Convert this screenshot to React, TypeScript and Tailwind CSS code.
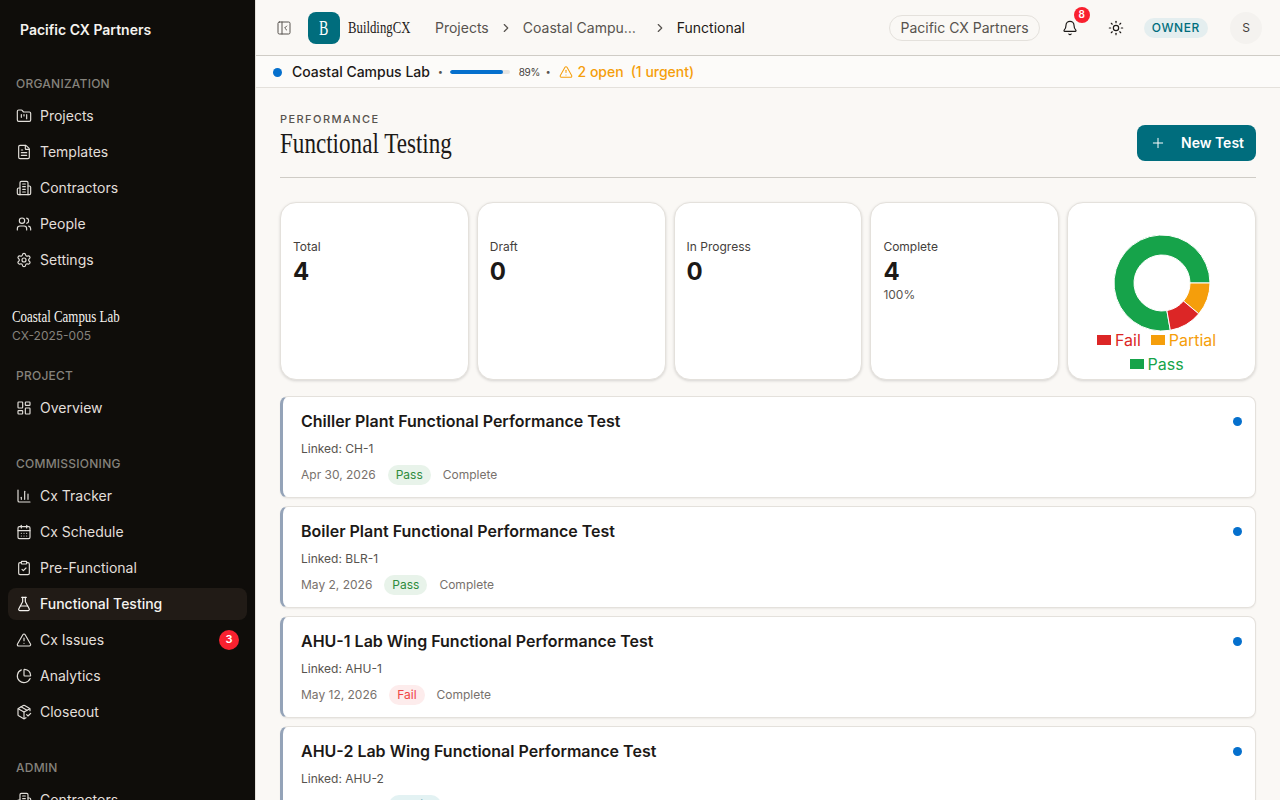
import {
  AlertTriangle,
  Bell,
  ChartColumn,
  CalendarDays,
  ClipboardCheck,
  FileText,
  FlaskConical,
  FolderKanban,
  LayoutDashboard,
  PackageCheck,
  PanelLeftClose,
  ChartPie,
  Plus,
  Settings,
  Sun,
  Users,
  ChevronRight,
} from "lucide-react"
import type { ComponentType } from "react"

const serif = "font-['Liberation_Serif',serif]"

type IconProps = { size?: number; strokeWidth?: number; className?: string }
type NavItem = { label: string; icon: ComponentType<IconProps>; active?: boolean; badge?: string }

// older lucide building glyph, the one in the picture
const OfficeIcon = ({ size = 16, strokeWidth = 1.75, className }: IconProps) => (
  <svg
    width={size}
    height={size}
    viewBox="0 0 24 24"
    fill="none"
    stroke="currentColor"
    strokeWidth={strokeWidth}
    strokeLinecap="round"
    strokeLinejoin="round"
    className={className}
  >
    <path d="M6 22V4a2 2 0 0 1 2-2h8a2 2 0 0 1 2 2v18Z" />
    <path d="M6 12H4a2 2 0 0 0-2 2v6a2 2 0 0 0 2 2h2" />
    <path d="M18 9h2a2 2 0 0 1 2 2v9a2 2 0 0 1-2 2h-2" />
    <path d="M10 6h4M10 10h4M10 14h4M10 18h4" />
  </svg>
)

const orgNav: NavItem[] = [
  { label: "Projects", icon: FolderKanban },
  { label: "Templates", icon: FileText },
  { label: "Contractors", icon: OfficeIcon },
  { label: "People", icon: Users },
  { label: "Settings", icon: Settings },
]

const cxNav: NavItem[] = [
  { label: "Cx Tracker", icon: ChartColumn },
  { label: "Cx Schedule", icon: CalendarDays },
  { label: "Pre-Functional", icon: ClipboardCheck },
  { label: "Functional Testing", icon: FlaskConical, active: true },
  { label: "Cx Issues", icon: AlertTriangle, badge: "3" },
  { label: "Analytics", icon: ChartPie },
  { label: "Closeout", icon: PackageCheck },
]

const tests = [
  { title: "Chiller Plant Functional Performance Test", linked: "CH-1", date: "Apr 30, 2026", result: "Pass" },
  { title: "Boiler Plant Functional Performance Test", linked: "BLR-1", date: "May 2, 2026", result: "Pass" },
  { title: "AHU-1 Lab Wing Functional Performance Test", linked: "AHU-1", date: "May 12, 2026", result: "Fail" },
  { title: "AHU-2 Lab Wing Functional Performance Test", linked: "AHU-2", date: "May 14, 2026", result: "Partial" },
]

const badgeStyles: Record<string, string> = {
  Pass: "bg-[#e8f3ea] text-[#2e8b3d]",
  Fail: "bg-[#fdecec] text-[#ef4444]",
  Partial: "bg-[#e3f2f3] text-[#006d7d]",
}

const NavRow = ({ item }: { item: NavItem }) => {
  const Icon = item.icon
  return (
    <div
      className={`h-8 mb-1 rounded-lg px-2 flex items-center gap-2 text-sm ${
        item.active ? "bg-[#211b16] text-[#f5f3ef] font-medium" : "text-[#e2dfda]"
      }`}
    >
      <Icon size={16} strokeWidth={1.75} className="shrink-0" />
      <span className="flex-1">{item.label}</span>
      {item.badge && (
        <span className="w-5 h-5 rounded-full bg-[#f9212f] text-white text-[11px] font-semibold flex items-center justify-center">
          {item.badge}
        </span>
      )}
    </div>
  )
}

const SectionLabel = ({ children }: { children: string }) => (
  <div className="px-2 h-4 mb-2 text-xs leading-4 font-medium text-[#85827c] tracking-[0.02em]">{children}</div>
)

const StatCard = ({ label, value, sub }: { label: string; value: string; sub?: string }) => (
  <div className="bg-white border border-[#e4e1dc] rounded-2xl shadow-[0_1px_3px_rgba(0,0,0,0.15)] px-3 pt-[36px]">
    <div className="text-xs leading-4 text-[#44403c]">{label}</div>
    <div className="mt-[1px] text-2xl leading-8 font-bold text-[#1c1917]">{value}</div>
    {sub && <div className="-mt-[1px] text-xs leading-4 text-[#57534e]">{sub}</div>}
  </div>
)

// slice between two angles, clockwise from 3 o'clock
const slice = (from: number, to: number) => {
  const pt = (r: number, a: number) => {
    const rad = (a * Math.PI) / 180
    return `${(48 + r * Math.cos(rad)).toFixed(2)} ${(48 + r * Math.sin(rad)).toFixed(2)}`
  }
  const large = to - from > 180 ? 1 : 0
  return `M${pt(48, from)} A48 48 0 ${large} 1 ${pt(48, to)} L${pt(28, to)} A28 28 0 ${large} 0 ${pt(28, from)} Z`
}

const LegendItem = ({ label, swatch, text }: { label: string; swatch: string; text: string }) => (
  <span className={`mr-[10px] flex items-center gap-1 ${text}`}>
    <span className={`w-[14px] h-[10px] ${swatch}`} />
    {label}
  </span>
)

const Donut = () => (
  <div className="bg-white border border-[#e4e1dc] rounded-2xl shadow-[0_1px_3px_rgba(0,0,0,0.15)] flex flex-col items-center pt-[32px]">
    <svg width="96" height="96" viewBox="0 0 96 96" className="shrink-0">
      <path d={slice(80, 360)} fill="#16a34a" stroke="#fff" strokeWidth="1" />
      <path d={slice(0, 40)} fill="#f59e0b" stroke="#fff" strokeWidth="1" />
      <path d={slice(40, 80)} fill="#dc2626" stroke="#fff" strokeWidth="1" />
    </svg>
    <div className="w-full flex flex-wrap justify-center text-base leading-6 -mt-[3px]">
      <LegendItem label="Fail" swatch="bg-[#dc2626]" text="text-[#dc2626]" />
      <LegendItem label="Partial" swatch="bg-[#f59e0b]" text="text-[#f59e0b]" />
    </div>
    <div className="w-full flex justify-center text-base leading-6">
      <LegendItem label="Pass" swatch="bg-[#16a34a]" text="text-[#16a34a]" />
    </div>
  </div>
)

const TestCard = ({ title, linked, date, result }: (typeof tests)[number]) => (
  <div className="shrink-0 h-[102px] bg-white border border-[#e4e1dc] border-l-[3px] border-l-[#94a3b8] rounded-lg pl-[18px] pr-3 pt-[12px] relative shadow-[0_1px_2px_rgba(0,0,0,0.06)]">
    <div className="text-base leading-6 font-semibold text-[#1c1917]">{title}</div>
    <div className="mt-[8px] text-xs leading-4 text-[#57534e]">Linked: {linked}</div>
    <div className="mt-[8px] flex items-center gap-3 text-xs text-[#78716c]">
      <span>{date}</span>
      <span className={`px-2 h-5 rounded-full flex items-center ${badgeStyles[result]}`}>{result}</span>
      <span>Complete</span>
    </div>
    <span className="absolute top-[20px] right-[13px] w-[9px] h-[9px] rounded-full bg-[#0570cd]" />
  </div>
)

const App = () => {
  return (
    <div className="h-[800px] w-[1280px] overflow-hidden flex bg-[#faf8f5] font-['Inter',sans-serif]">
      {/* Sidebar */}
      <aside className="w-[256px] shrink-0 h-full overflow-hidden bg-[#0f0d0a] border-r border-[#e4e1dc] px-2">
        <div className="px-3 pt-[21px] pb-[37px] text-sm leading-[18px] font-semibold text-[#f5f3ef]">Pacific CX Partners</div>
        <SectionLabel>ORGANIZATION</SectionLabel>
        {orgNav.map((item) => (
          <NavRow key={item.label} item={item} />
        ))}
        <div className="px-1 mt-[31px]">
          <div className="w-[108px] h-5">
            <div className={`${serif} origin-left scale-x-[0.76] whitespace-nowrap text-[17px] leading-5 text-[#f5f3ef]`}>
              Coastal Campus Lab
            </div>
          </div>
          <div className="text-xs leading-4 mt-[1px] text-[#85827c]">CX-2025-005</div>
        </div>
        <div className="mt-[24px]">
          <SectionLabel>PROJECT</SectionLabel>
          <NavRow item={{ label: "Overview", icon: LayoutDashboard }} />
        </div>
        <div className="mt-[32px]">
          <SectionLabel>COMMISSIONING</SectionLabel>
          {cxNav.map((item) => (
            <NavRow key={item.label} item={item} />
          ))}
        </div>
        <div className="mt-[32px]">
          <SectionLabel>ADMIN</SectionLabel>
          <NavRow item={{ label: "Contractors", icon: OfficeIcon }} />
        </div>
      </aside>

      <div className="flex-1 min-w-0 flex flex-col">
        {/* Top bar */}
        <header className="h-[56px] shrink-0 border-b border-[#cfccc6] flex items-center pl-[20px] pr-[18px]">
          <PanelLeftClose size={16} strokeWidth={1.5} className="text-[#57534e]" />
          <div className="ml-[16px] w-8 h-8 rounded-lg bg-[#006d7d] flex items-center justify-center">
            <span className={`${serif} scale-x-[0.7] text-xl text-white`}>B</span>
          </div>
          <div className="ml-2 w-[62px]">
            <div className={`${serif} origin-left scale-x-[0.75] whitespace-nowrap text-[17px] text-[#1c1917]`}>BuildingCX</div>
          </div>
          <div className="ml-[25px] flex items-center text-sm text-[#57534e]">
            <span>Projects</span>
            <ChevronRight size={14} className="mx-[10px] text-[#57534e]" />
            <span className="w-[114px] truncate">Coastal Campus Lab</span>
            <ChevronRight size={14} className="ml-[16px] mr-[10px] text-[#57534e]" />
            <span className="text-[#1c1917]">Functional</span>
          </div>
          <div className="ml-auto flex items-center">
            <span className="h-[26px] px-[10px] rounded-full border border-[#e4e1dc] text-sm text-[#57534e] flex items-center">
              Pacific CX Partners
            </span>
            <span className="relative flex ml-[22px]">
              <Bell size={16} strokeWidth={1.75} className="text-[#1c1917]" />
              <span className="absolute -top-[13px] left-3 w-4 h-4 rounded-full bg-[#f9212f] text-white text-[10px] font-semibold flex items-center justify-center">
                8
              </span>
            </span>
            <Sun size={16} strokeWidth={1.75} className="ml-[30px] text-[#1c1917]" />
            <span className="ml-[20px] h-5 px-2 rounded-full bg-[#e4eeef] text-[#006d7d] text-xs font-medium tracking-[0.05em] flex items-center">
              OWNER
            </span>
            <span className="ml-[22px] w-8 h-8 rounded-full bg-[#f4f2ef] text-xs text-[#44403c] flex items-center justify-center">S</span>
          </div>
        </header>

        {/* Project strip */}
        <div className="h-[32px] shrink-0 border-b border-[#e4e1dc] bg-[#fcfbf9] flex items-center pl-[17px] pt-[1px] text-sm font-medium">
          <span className="w-[9px] h-[9px] rounded-full bg-[#0570cd]" />
          <span className="ml-[10px] text-[#1c1917]">Coastal Campus Lab</span>
          <span className="ml-[8px] mr-[7px] text-[#57534e] text-[9px]">•</span>
          <span className="w-[60px] h-1 rounded-full bg-[#e7e5e2] overflow-hidden">
            <span className="block h-full w-[89%] rounded-full bg-[#0570cd]" />
          </span>
          <span className="ml-[9px] w-[20px] text-[10px] font-normal tracking-[-0.03em] text-[#44403c]">89%</span>
          <span className="ml-[7px] mr-[8px] text-[#57534e] text-[9px]">•</span>
          <AlertTriangle size={14} strokeWidth={1.75} className="text-[#f59e0b]" />
          <span className="ml-[5px] text-[#f59e0b]">2 open</span>
          <span className="ml-[7px] text-[#f59e0b]">(1 urgent)</span>
        </div>

        {/* Main content */}
        <main className="flex-1 min-h-0 overflow-hidden px-[24px] pt-[24px]">
          <div className="flex items-end justify-between h-[66px] border-b border-[#cfccc6] pb-[16px]">
            <div className="self-start">
              <div className="text-[11px] leading-[14px] font-medium tracking-[0.13em] text-[#57534e]">PERFORMANCE</div>
              <div className="w-[172px]">
                <h1 className={`${serif} origin-left scale-x-[0.77] whitespace-nowrap text-[30px] leading-[34px] font-normal text-[#1c1917]`}>
                  Functional Testing
                </h1>
              </div>
            </div>
            <button className="h-9 w-[119px] rounded-lg bg-[#006d7d] text-white text-sm font-semibold flex items-center pl-[13px] gap-[15px]">
              <Plus size={16} strokeWidth={1.5} />
              New Test
            </button>
          </div>

          <div className="mt-[24px] grid grid-cols-5 gap-2 h-[178px]">
            <StatCard label="Total" value="4" />
            <StatCard label="Draft" value="0" />
            <StatCard label="In Progress" value="0" />
            <StatCard label="Complete" value="4" sub="100%" />
            <Donut />
          </div>

          <div className="mt-[16px] flex flex-col gap-2">
            {tests.map((t) => (
              <TestCard key={t.title} {...t} />
            ))}
          </div>
        </main>
      </div>
    </div>
  )
}

export default App
